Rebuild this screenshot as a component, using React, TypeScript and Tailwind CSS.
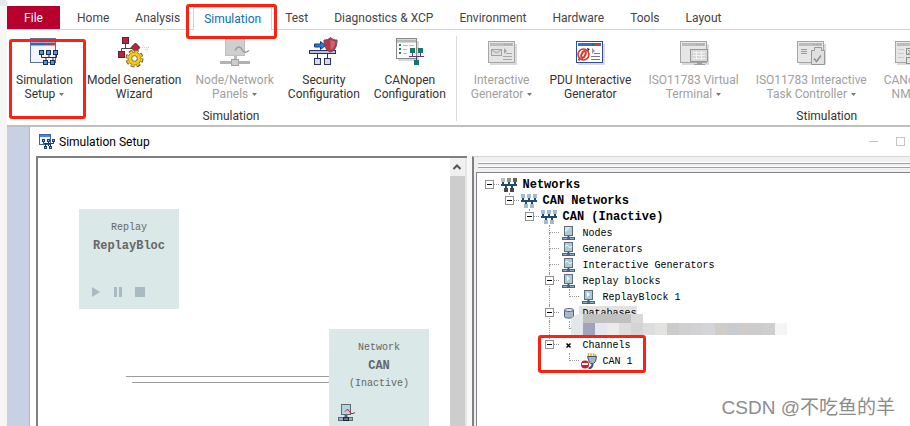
import { ReactNode } from 'react';
import clsx from 'clsx';

const tabs = [
  'Home',
  'Analysis',
  'Simulation',
  'Test',
  'Diagnostics & XCP',
  'Environment',
  'Hardware',
  'Tools',
  'Layout',
];

interface CommandProps {
  icon: ReactNode;
  lines: string[];
  menu?: boolean;
  disabled?: boolean;
}

function Command({ icon, lines, menu, disabled }: CommandProps) {
  return (
    <button
      type="button"
      disabled={disabled}
      className={clsx(
        'flex shrink-0 flex-col items-center px-[7px] text-[12px] leading-[14px] whitespace-nowrap',
        disabled ? 'text-[#a0a0a0]' : 'text-[#333333]',
      )}
    >
      <svg viewBox="0 0 32 32" className="mb-[5px] size-8">
        {icon}
      </svg>
      <span>{lines[0]}</span>
      <span className="flex items-center gap-1">
        {lines[1]}
        {menu && (
          <svg viewBox="0 0 5 3" className="h-[3px] w-[5px]">
            <path d="M0 0h5L2.500 3z" fill="#777" />
          </svg>
        )}
      </span>
    </button>
  );
}

function WindowFrame({ color, bar, fill = '#fff' }: { color: string; bar: string; fill?: string }) {
  return (
    <>
      <path d="M4 28h26V8" fill="none" stroke="#d0d0d0" strokeWidth="1.500" />
      <rect x="2.500" y="5.500" width="26" height="21" fill={fill} stroke={color} />
      <rect x="4" y="7" width="23" height="3" fill={bar} />
      <path d="M18 8.500h2m1 0h2m1 0h2" stroke={color} />
    </>
  );
}

const simulationIcon = (
  <>
    <rect x="2.500" y="2.500" width="25" height="24" fill="#f3f7fd" stroke="#5a70a8" />
    <path d="M3 8h24" stroke="#2f66b8" strokeWidth="3" />
    <path d="M18 8.500h2m1 0h2m1 0h3" stroke="#d04030" />
    <path d="M13.500 18v3.500h15V18M21 18v3.500M18 21v4M25 21v4" fill="none" stroke="#1c2c58" />
    <g fill="#4f9be0" stroke="#1c2c58">
      <rect x="11.500" y="14.500" width="4" height="4" />
      <rect x="18.500" y="14.500" width="4" height="4" />
      <rect x="25.500" y="14.500" width="4" height="4" />
      <rect x="15.500" y="24.500" width="4" height="4" />
      <rect x="22.500" y="24.500" width="4" height="4" />
    </g>
  </>
);

const wizardIcon = (
  <>
    <path d="M7.500 8v4.500H14M3.500 16v-3.500H8" fill="none" stroke="#444" />
    <g fill="#b8243c" stroke="#6a2030">
      <rect x="4.500" y="1.500" width="6" height="6" />
      <rect x="0.500" y="15.500" width="6" height="6" />
      <path d="M17.500 7l4.500 4.500-4.500 4.500-4.500-4.500z" />
    </g>
    <path d="M22 11.500h9M25 9.500h2m0 4h3m-1-2v5" fill="none" stroke="#d0d0d0" strokeDasharray="1 1" />
    <circle cx="16.500" cy="22.500" r="7" fill="none" stroke="#7c5c10" strokeWidth="4" strokeDasharray="3.500 2" />
    <circle cx="16.500" cy="22.500" r="6.500" fill="#f0c828" stroke="#a07c14" />
    <circle cx="16.500" cy="22.500" r="7" fill="none" stroke="#f0c828" strokeWidth="2" strokeDasharray="2.500 3" strokeDashoffset="-0.500" />
    <circle cx="16.500" cy="22.500" r="2.800" fill="#fff" stroke="#8a6a14" />
  </>
);

const nodePanelIcon = (
  <>
    <rect x="6.500" y="2.500" width="19" height="17" fill="#cfcfcf" stroke="#c0c0c0" />
    <path d="M15 20v4h3v-4" fill="#bbb" />
    <path d="M1 25h30v3H1z" fill="#b2b2b2" />
    <rect x="12.500" y="23.500" width="7" height="6" fill="#ccc" stroke="#a2a2a2" />
    <path d="M16 14.500c2-4 5-5 7-1s4 3 7 1" fill="none" stroke="#999" strokeWidth="1.500" />
  </>
);

const securityIcon = (
  <>
    <path d="M9.500 18v5M19.500 18v5" fill="none" stroke="#303060" />
    <rect x="1.500" y="14.500" width="26" height="3" fill="#b8c0dc" stroke="#303060" />
    <g fill="#d4dae8" stroke="#303060">
      <rect x="6.500" y="22.500" width="6" height="6" />
      <rect x="16.500" y="22.500" width="6" height="6" />
    </g>
    <path d="M6.500 8h6V5.500l5 4-5 4V11h-6z" fill="#2a7cd0" stroke="#123c78" />
    <path d="M22.500 1.500c2 2 4 2.500 6.500 2.500 0 6-1.500 10-6.500 12-5-2-6.500-6-6.500-12 2.500 0 4.500-.5 6.500-2.500z" fill="#b83448" stroke="#5c5060" />
    <path d="M22.500 3.500c1.500 1.200 3 1.700 4.700 1.800 0 4-1 7-4.700 8.700z" fill="#d4606c" />
  </>
);

const canOpenIcon = (
  <>
    <path d="M4 24h20V5" fill="none" stroke="#ccc" strokeWidth="1.500" />
    <rect x="2.500" y="2.500" width="20" height="20" fill="#fafafa" stroke="#888" />
    <path d="M3 5h19" stroke="#b8b8b8" strokeWidth="3" />
    <path d="M5 9h2m-2 4h2m-2 4h2" stroke="#138070" strokeWidth="2" />
    <path d="M9 9.500h5m-5 4h4m-4 4h4M15 9.500h5" stroke="#bbb" />
    <path d="M15 20.500h15M18.500 16v4M26.500 16v4M22.500 20v5" stroke="#5c3c78" fill="none" />
    <path d="M16 12h5v5h-5zM24 12h5v5h-5zM20 24h5v5h-5z" fill="#137868" />
  </>
);

const interactiveIcon = (
  <>
    <WindowFrame color="#a6a6a6" bar="#bcbcbc" fill="#e4e4e4" />
    <rect x="5.500" y="13.500" width="10" height="6" fill="#ddd" stroke="#a4a4a4" />
    <path d="M6 14l4.500 3L15 14" fill="none" stroke="#a4a4a4" />
    <path d="M18 12l3 3-3 3z" fill="#a4a4a4" />
    <path d="M20 17.500h6m-9 3h9m-9 3h9" stroke="#a8a8a8" />
  </>
);

const pduIcon = (
  <>
    <WindowFrame color="#2c4c9c" bar="#3c6cc0" />
    <path d="M21 8.500h2m1 0h2" stroke="#e04030" />
    <circle cx="9.500" cy="18.500" r="5.500" fill="#fff" stroke="#e03428" strokeWidth="1.500" />
    <ellipse cx="9.500" cy="18.500" rx="1.800" ry="3.600" fill="#fff" stroke="#e03428" strokeWidth="2" transform="rotate(25 9.500 18.500)" />
    <path d="M13 12l3 1-2 2M6 25l-2-1 1-2" fill="#222" />
    <path d="M18 12l3 3-3 3z" fill="#999" />
    <path d="M20 17.500h6m-9 3h9m-9 3h9" stroke="#777" />
  </>
);

const terminalIcon = (
  <>
    <WindowFrame color="#a6a6a6" bar="#bcbcbc" fill="#e6e6e6" />
    <rect x="12.500" y="13.500" width="17" height="12" fill="#d8d8d8" stroke="#989898" />
    <path d="M15 16.500h12m-12 3h12m-12 3h12M18.500 15v9m5-9v9" stroke="#f2f2f2" />
    <path d="M19 26h5v2h3v1H16v-1h3z" fill="#a0a0a0" />
  </>
);

const taskIcon = (
  <>
    <WindowFrame color="#a6a6a6" bar="#bcbcbc" fill="#e6e6e6" />
    <path d="M6 13.500h6m-6 2h6m-6 2h6" stroke="#999" />
    <path d="M16.500 14.500h3v-3h7v3h3v14h-13z" fill="#e0e0e0" stroke="#989898" />
    <path d="M19 22.500l2.500 3 4.500-6" fill="none" stroke="#909090" strokeWidth="1.500" />
  </>
);

const nmtIcon = (
  <>
    <WindowFrame color="#a6a6a6" bar="#bcbcbc" fill="#e6e6e6" />
    <path d="M5 13.500h6m-6 4h6m-6 4h6" stroke="#ccc" />
    <g fill="#e2e2e2" stroke="#909090">
      <rect x="13.500" y="12.500" width="8" height="6" />
      <rect x="13.500" y="21.500" width="8" height="6" />
      <path d="M15 14l5 4m0-4l-5 4" />
    </g>
  </>
);

function SetupIcon() {
  return (
    <svg viewBox="0 0 16 16" className="size-4">
      <rect x="0.500" y="0.500" width="11" height="10" fill="#eef4fc" stroke="#486098" />
      <path d="M1 2h10" stroke="#3c8cd0" strokeWidth="2" />
      <path d="M4.500 7v2.500h10V7M9.500 7v5M6.500 9v3M11.500 9v3" fill="none" stroke="#1c3468" />
      <path d="M3 5h3v3H3zM8 5h3v3H8zM13 5h3v3h-3zM5 12h3v3H5zM10 12h3v3h-3z" fill="#1c3c80" />
      <path d="M4 6h1v1H4zM9 6h1v1H9zM14 6h1v1h-1zM6 13h1v1H6zM11 13h1v1h-1z" fill="#8cc0f0" />
    </svg>
  );
}

type IconKind = 'root' | 'network' | 'node' | 'wave' | 'replay' | 'database' | 'channels' | 'connector';

function TreeIcon({ kind }: { kind: IconKind }) {
  if (kind === 'root' || kind === 'network') {
    const root = kind === 'root';
    return (
      <svg viewBox="0 0 16 14" className="h-[14px] w-4">
        <path d="M0 7h16" stroke="#1c4c74" strokeWidth="2" />
        <path d="M2 4v4M8 4v4M14 4v4M5 6v5M11 6v5" stroke="#1c4c74" strokeWidth="2" />
        <path d="M0 0h4v4H0z" fill={root ? '#bdbdbd' : '#9cc0dc'} />
        <path d="M6 0h4v4H6z" fill={root ? '#909090' : '#9cc0dc'} />
        <path d="M12 0h4v4h-4z" fill={root ? '#606060' : '#a8b8cc'} />
        <path d="M3 10h4v4H3zM9 10h4v4H9z" fill={root ? '#484848' : '#a8b8cc'} />
      </svg>
    );
  }
  if (kind === 'database') {
    return (
      <svg viewBox="0 0 12 12" className="size-3">
        <path d="M1.500 3v7c1 1.500 8 1.500 9 0V3z" fill="#a8b8cc" stroke="#56657c" />
        <path d="M1.500 3c0-2 9-2 9 0s-9 2-9 0z" fill="#dce6f0" stroke="#56657c" />
      </svg>
    );
  }
  if (kind === 'channels') {
    return (
      <svg viewBox="0 0 5 5" className="size-[5px]">
        <path d="M0.500 0.500l4 4M4.500 0.500l-4 4" stroke="#000" strokeWidth="1.500" />
      </svg>
    );
  }
  if (kind === 'connector') {
    return (
      <svg viewBox="0 0 16 16" className="size-4">
        <path d="M7.500 0v4M10 0v4M12.500 0v4M14.500 1v3" stroke="#e0b810" strokeWidth="1.500" />
        <path d="M6.500 3.500h9l-1 5-2 2h-3l-1.500-2z" fill="#a4b4c8" stroke="#445064" />
        <path d="M11.500 11c0 3-1 4-4 4.500" fill="none" stroke="#445064" strokeWidth="2" />
        <circle cx="4" cy="11.500" r="4" fill="#d01c30" />
        <path d="M1 10h6v2H1z" fill="#fff" />
      </svg>
    );
  }
  return (
    <svg viewBox="0 0 13 14" className="h-[14px] w-[13px]">
      <rect x="2.500" y="0.500" width="8" height="9" fill="#a9cbe0" stroke="#626c78" />
      {kind === 'wave' && <path d="M3 5c1.500-3 2.500-2 3.500-.5S9 6 10 4" fill="none" stroke="#fff" />}
      {kind === 'replay' && <path d="M5 2l3 2.500L5 7z" fill="#fff" />}
      {kind === 'node' && <path d="M3 7V1h6z" fill="#d6e6f2" />}
      <path d="M6.500 10v2" stroke="#46505c" strokeWidth="2" />
      <path d="M0 12.500h13" stroke="#56616e" strokeWidth="3" />
      <path d="M1 12.500h4m3 0h4" stroke="#8cb4d4" />
    </svg>
  );
}

interface TreeItem {
  label: string;
  depth: number;
  icon: IconKind;
  expandable?: boolean;
  last?: boolean;
  // depth of an ancestor column whose guide line runs past this row
  guide?: number;
  shaded?: boolean;
}

const tree: TreeItem[] = [
  { label: 'Networks', depth: 0, icon: 'root', expandable: true, last: true },
  { label: 'CAN Networks', depth: 1, icon: 'network', expandable: true, last: true },
  { label: 'CAN (Inactive)', depth: 2, icon: 'network', expandable: true, last: true },
  { label: 'Nodes', depth: 3, icon: 'node' },
  { label: 'Generators', depth: 3, icon: 'wave' },
  { label: 'Interactive Generators', depth: 3, icon: 'wave' },
  { label: 'Replay blocks', depth: 3, icon: 'replay', expandable: true },
  { label: 'ReplayBlock 1', depth: 4, icon: 'replay', last: true, guide: 3 },
  { label: 'Databases', depth: 3, icon: 'database', expandable: true, shaded: true },
  { label: '', depth: 4, icon: 'database', last: true, guide: 3 },
  { label: 'Channels', depth: 3, icon: 'channels', expandable: true, last: true },
  { label: 'CAN 1', depth: 4, icon: 'connector', last: true },
];

function TreeRow({ item }: { item: TreeItem }) {
  const columns = Array.from({ length: item.depth }, (_, i) => i);
  return (
    <li className="flex h-4 items-center">
      {columns.map((c) => (
        <span key={c} className="flex h-4 w-5 shrink-0 pl-[10px]">
          {item.guide === c && <span className="border-l border-dotted border-[#999999]" />}
        </span>
      ))}
      <span className="grid h-4 w-5 shrink-0 grid-cols-2 grid-rows-2">
        <span
          className={clsx(
            'col-start-2 row-start-1 border-b border-dotted border-[#999999]',
            item.depth > 0 && 'border-l',
          )}
        />
        {!item.last && <span className="col-start-2 row-start-2 border-l border-dotted border-[#999999]" />}
        {item.expandable && (
          <button
            type="button"
            aria-label={`Collapse ${item.label}`}
            className="col-span-2 col-start-1 row-span-2 row-start-1 ml-[6px] mt-[3px] flex size-[9px] items-center justify-center border border-[#919191] bg-white"
          >
            <span className="h-px w-[5px] bg-black" />
          </button>
        )}
      </span>
      <span className="flex w-5 shrink-0 justify-center">{item.label && <TreeIcon kind={item.icon} />}</span>
      <span
        className={clsx(
          'pl-1 whitespace-pre',
          item.depth < 3 ? 'text-[12px] font-bold' : 'text-[10px]',
          item.shaded && 'bg-[#e2e2e2]',
        )}
      >
        {item.label}
      </span>
    </li>
  );
}

const mosaic = [
  '#e4e7ea', '#9fa3bb', '#e6e6ee', '#ebebeb', '#dedddd', '#d2d5d4', '#dddddd', '#e3e3e1', '#cbcbc9',
  '#d0d0d0', '#d2d2d4', '#d4d5d8', '#d4d5d8', '#d0ccc7', '#c8ccd0', '#cecbca', '#cccccc', '#cecece', '#f4f5f7',
];

function Redaction() {
  return (
    <svg viewBox="0 0 232 32" className="absolute top-[132px] left-[91px] h-8 w-[232px]" aria-hidden="true">
      <path d="M3 30V15c2-5 6-6 12-6v21z" fill="#e4e7ea" />
      <path d="M15 9h48v9H15z" fill="#c0c0c0" />
      <path d="M63 9h12v9H63z" fill="#dadada" />
      {mosaic.map((color, i) => (
        <rect key={i} x={3 + i * 12 - (i > 12 ? 12 : 0)} y="18" width="12" height="12" fill={color} />
      ))}
    </svg>
  );
}

function SimulationCanvas() {
  return (
    <div className="relative min-w-0 flex-1 overflow-hidden bg-white font-['Liberation_Mono',monospace] text-[10px] leading-[18px] text-[#666666]">
      <svg viewBox="0 0 210 10" className="absolute top-[217px] left-[88px] h-[10px] w-[210px]">
        <path d="M0 1.500h210M6 7.500h204" stroke="#9c9c9c" />
      </svg>
      <div className="absolute top-[51px] left-[41px] flex size-[100px] flex-col items-center bg-[#dae8e7] pt-[10px]">
        <span>Replay</span>
        <span className="text-[12px] font-bold">ReplayBloc</span>
        <svg viewBox="0 0 54 10" className="mt-8 mr-[20px] h-[10px] w-[54px]" fill="#a9bac3">
          <path d="M0 0l8 5-8 5zM22 0h3v10h-3zM27 0h3v10h-3zM43 0h10v10H43z" />
        </svg>
      </div>
      <div className="absolute top-[171px] left-[291px] flex size-[100px] flex-col items-center bg-[#dae8e7] pt-[10px]">
        <span>Network</span>
        <span className="text-[12px] font-bold">CAN</span>
        <span>(Inactive)</span>
        <svg viewBox="0 0 17 17" className="mt-[11px] ml-[9px] size-[17px] self-start">
          <rect x="3.500" y="0.500" width="9" height="10" fill="#b4d4e4" stroke="#606870" />
          <path d="M8 11v3" stroke="#606870" strokeWidth="3" />
          <rect x="0.500" y="13.500" width="14" height="3" fill="#94b4d4" stroke="#606870" />
          <rect x="5.500" y="13.500" width="5" height="3" fill="#607890" stroke="#202830" />
          <path d="M7 7.500l2-2 2 1 2 3h2l2-1" fill="none" stroke="#c01c30" />
        </svg>
      </div>
    </div>
  );
}

export default function App() {
  return (
    <div className="relative flex h-screen overflow-hidden bg-white font-[Roboto,'Liberation_Sans',sans-serif] text-[12px]">
      <div className="w-[7px] shrink-0 border-t-[6px] border-[#e8e8e8] bg-[#f6f6f6]" />

      <div className="flex min-w-0 flex-1 flex-col">
        {/* Ribbon tabs */}
        <nav className="flex h-[30px] shrink-0 items-end border-b border-[#d4d4d4] pr-4 text-[#444444]">
          <button type="button" className="mr-1 h-[23px] w-[53px] shrink-0 bg-[#b8002e] text-white">
            File
          </button>
          {tabs.map((tab) => (
            <button
              key={tab}
              type="button"
              className={clsx(
                'h-[23px] shrink-0 whitespace-nowrap',
                tab === 'Simulation'
                  ? '-mb-px border-x border-t border-[#d4d4d4] bg-white px-[10px] text-[#0a6cc4]'
                  : 'px-[13px]',
              )}
            >
              {tab}
            </button>
          ))}
        </nav>

        {/* Ribbon commands */}
        <div className="flex h-[97px] shrink-0 overflow-hidden border-b-2 border-[#bfbfbf] pt-[6px] pl-[2px]">
          <section className="flex shrink-0 flex-col">
            <div className="flex items-start">
              <Command icon={simulationIcon} lines={['Simulation', 'Setup']} menu />
              <Command icon={wizardIcon} lines={['Model Generation', 'Wizard']} />
              <Command icon={nodePanelIcon} lines={['Node/Network', 'Panels']} menu disabled />
              <Command icon={securityIcon} lines={['Security', 'Configuration']} />
              <Command icon={canOpenIcon} lines={['CANopen', 'Configuration']} />
            </div>
            <h2 className="mt-2 text-center leading-[14px] text-[#333333]">Simulation</h2>
          </section>
          <div className="mr-[7px] ml-[3px] mb-1 w-px shrink-0 bg-[#dcdcdc]" />
          <section className="flex w-[726px] shrink-0 flex-col">
            <div className="flex items-start gap-[3px]">
              <Command icon={interactiveIcon} lines={['Interactive', 'Generator']} menu disabled />
              <Command icon={pduIcon} lines={['PDU Interactive', 'Generator']} />
              <Command icon={terminalIcon} lines={['ISO11783 Virtual', 'Terminal']} menu disabled />
              <Command icon={taskIcon} lines={['ISO11783 Interactive', 'Task Controller']} menu disabled />
              <Command icon={nmtIcon} lines={['CANopen', 'NMT']} menu disabled />
            </div>
            <h2 className="mt-2 text-center leading-[14px] text-[#333333]">Stimulation</h2>
          </section>
        </div>

        {/* Workspace */}
        <div className="flex min-h-0 flex-1 bg-[#c8d1e3] pl-[22px]">
          <div className="flex min-w-0 flex-1 flex-col border-l border-[#b8b8b8] bg-white">
            <header className="flex h-[29px] shrink-0 items-center pr-[5px] pl-[9px] text-black">
              <SetupIcon />
              <h1 className="ml-1 flex-1">Simulation Setup</h1>
              <button type="button" aria-label="Minimize" className="mr-[18px]">
                <span className="block h-px w-[9px] bg-[#c4c4c4]" />
              </button>
              <button type="button" aria-label="Maximize" className="size-[9px] border border-[#c4c4c4]" />
            </header>

            <div className="flex min-h-0 flex-1 pl-[6px]">
              <div className="flex min-w-0 flex-[431] border-t-2 border-l-2 border-[#808080]">
                <SimulationCanvas />
                <div className="flex w-[15px] shrink-0 flex-col bg-[#cdcdcd]">
                  <button type="button" aria-label="Scroll up" className="flex h-[18px] items-center justify-center bg-[#f0f0f0]">
                    <svg viewBox="0 0 8 6" className="h-[6px] w-2">
                      <path d="M0.500 5L4 1.500 7.500 5" fill="none" stroke="#555" strokeWidth="2" />
                    </svg>
                  </button>
                </div>
                <div className="w-[2px] shrink-0 bg-[#e6e6e6]" />
              </div>
              <div className="w-[5px] shrink-0 bg-[#f8f8f8]" />

              <div className="flex min-w-0 flex-[437] flex-col border-t border-l-2 border-t-[#d6d6d6] border-l-[#808080] bg-[#f0f0f0] pl-[2px]">
                <div className="mt-[5px] ml-[2px] h-[2px] shrink-0 border-t border-b border-t-white border-b-[#a0a0a0]" />
                <div className="mt-[2px] mb-1 ml-[2px] h-[2px] shrink-0 border-t border-b border-t-white border-b-[#a0a0a0]" />
                <div className="relative min-h-0 flex-1 overflow-hidden border-t border-l border-[#7f8490] bg-white pt-1 pl-[2px] font-['Liberation_Mono',monospace] text-black">
                  <ul>
                    {tree.map((item, i) => (
                      <TreeRow key={i} item={item} />
                    ))}
                  </ul>
                  <Redaction />
                </div>
              </div>
            </div>
          </div>
        </div>
      </div>

      {/* Step highlights */}
      <div className="pointer-events-none absolute top-[39px] left-[9px] h-[80px] w-[77px] rounded-[3px] border-[3px] border-[#fe2010]" />
      <div className="pointer-events-none absolute top-[4px] left-[186px] h-[35px] w-[91px] rounded-[3px] border-[3px] border-[#fe2010]" />
      <div className="pointer-events-none absolute top-[335px] left-[538px] h-[38px] w-[108px] rounded-[3px] border-[3px] border-[#fe2010]" />

      <div className="pointer-events-none absolute right-[15px] bottom-1 font-['Liberation_Sans','Noto_Sans_CJK_SC',sans-serif] text-[19px] leading-7 text-[#8c8c8c]">
        CSDN @不吃鱼的羊
      </div>
    </div>
  );
}
